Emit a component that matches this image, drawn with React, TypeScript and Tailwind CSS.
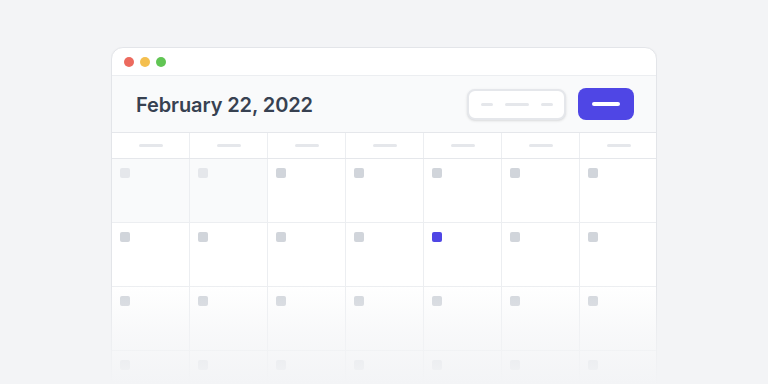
export default function App() {
  const rows = [0, 1, 2, 3];
  const cols = [0, 1, 2, 3, 4, 5, 6];

  return (
    <div className="min-h-screen w-full bg-[#f3f4f6] overflow-hidden font-['Inter',sans-serif]">
      <div className="relative mx-auto mt-[47px] w-[546px] h-[337px] overflow-hidden">
        <div className="w-full rounded-t-xl border border-[#e3e5e9] bg-white shadow-[0_1px_3px_rgba(0,0,0,0.06)]">
          {/* Title bar */}
          <div className="flex h-[28px] items-center gap-[6px] border-b border-[#eceef1] pl-[12px]">
            <span className="h-[10px] w-[10px] rounded-full bg-[#ec6a5e]" />
            <span className="h-[10px] w-[10px] rounded-full bg-[#f4bf4f]" />
            <span className="h-[10px] w-[10px] rounded-full bg-[#61c554]" />
          </div>

          {/* Header */}
          <div className="flex h-[57px] items-center justify-between border-b border-[#e5e7eb] bg-[#f9fafb] pl-6 pr-[22px]">
            <h1 className="pt-[2px] text-[20px] font-semibold text-[#374151] tracking-[-0.1px]">February 22, 2022</h1>
            <div className="flex items-center gap-3">
              <div className="flex h-[31px] w-[99px] items-center justify-center gap-3 rounded-lg border-2 border-[#e5e7eb] bg-white shadow-sm">
                <span className="h-[3px] w-3 rounded-full bg-[#e5e7eb]" />
                <span className="h-[3px] w-6 rounded-full bg-[#e5e7eb]" />
                <span className="h-[3px] w-3 rounded-full bg-[#e5e7eb]" />
              </div>
              <div className="flex h-8 w-14 items-center justify-center rounded-lg bg-[#4f46e5]">
                <span className="h-1 w-7 rounded-full bg-white" />
              </div>
            </div>
          </div>

          {/* Day names */}
          <div className="grid grid-cols-[77px_repeat(6,78px)] border-b border-[#e5e7eb]">
            {cols.map((c) => (
              <div key={c} className={`flex h-[25px] items-center justify-center ${c > 0 ? 'border-l border-[#eceef1]' : ''}`}>
                <span className="h-[3px] w-6 rounded-full bg-[#e5e7eb]" />
              </div>
            ))}
          </div>

          {/* Weeks */}
          {rows.map((r) => (
            <div key={r} className="grid grid-cols-[77px_repeat(6,78px)] border-b border-[#eceef1]">
              {cols.map((c) => {
                const prev = r === 0 && c < 2;
                const today = r === 1 && c === 4;
                return (
                  <div
                    key={c}
                    className={`h-[63px] pl-2 pt-[9px] ${c > 0 ? 'border-l border-[#eceef1]' : ''} ${prev ? 'bg-[#f9fafb]' : ''}`}
                  >
                    <div
                      className={`h-[10px] w-[10px] rounded-[2px] ${today ? 'bg-[#4f46e5]' : prev ? 'bg-[#e5e7eb]' : 'bg-[#d1d5db]'}`}
                    />
                  </div>
                );
              })}
            </div>
          ))}
        </div>

        {/* Fade out */}
        <div className="pointer-events-none absolute inset-x-[-4px] bottom-0 h-[100px] bg-gradient-to-b from-[#f3f4f6]/0 via-[#f3f4f6]/60 to-[#f3f4f6]" />
      </div>
    </div>
  );
}
